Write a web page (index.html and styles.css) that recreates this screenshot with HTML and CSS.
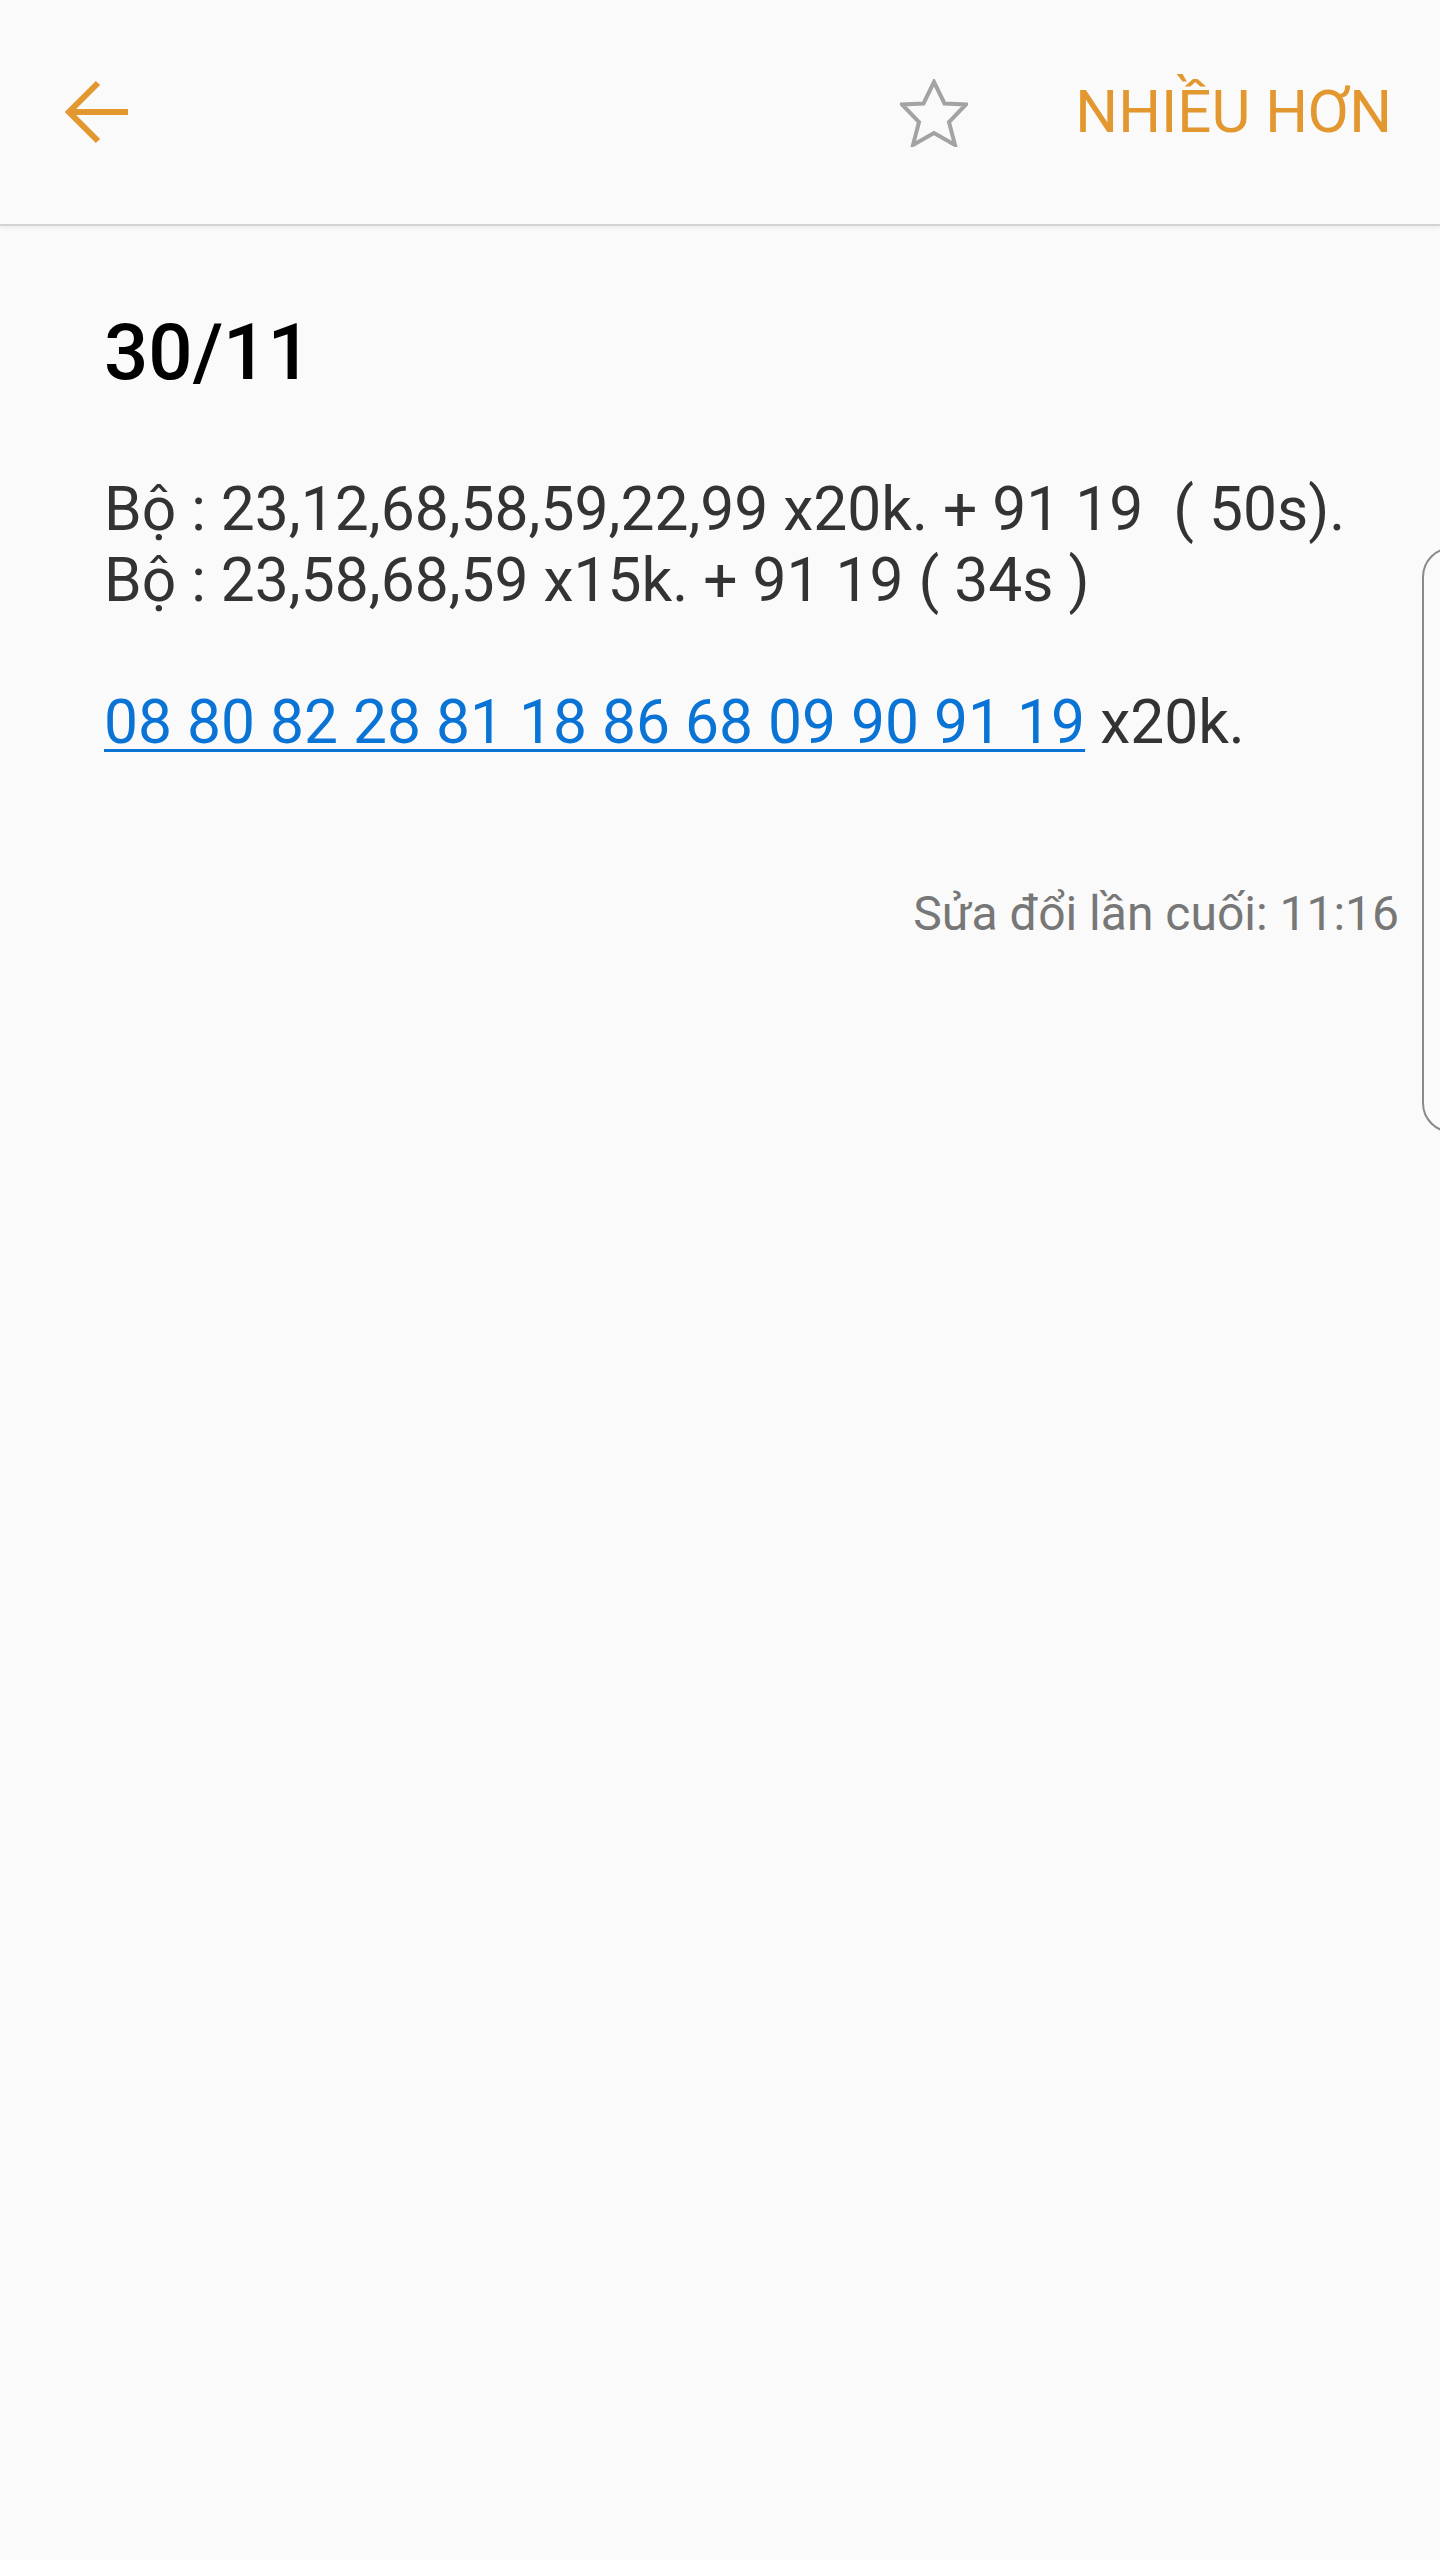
FILE: index.html
```html
<!DOCTYPE html>
<html lang="vi">
  <head>
    <meta name="viewport" content="width=device-width, initial-scale=1.0" />
    <title>30/11</title>
    <link rel="stylesheet" href="styles.css">
  </head>

  <body>
    <!-- Toolbar -->
    <header class="toolbar">
      <a class="back" href="#">
        <svg width="64" height="64" viewBox="0 0 64 64">
          <path d="M64 32 H5 M34 3 L5 32 L34 61" fill="none" stroke="#e2972f" stroke-width="6" />
        </svg>
      </a>
      <div class="actions">
        <svg class="star" width="68" height="68" viewBox="0 0 68 68">
          <polygon points="34,3 44.5,24.5 66,25.5 49,43 55,66 34,54 13,66 19,43 2,25.5 23.5,24.5" fill="none" stroke="#a3a3a3" stroke-width="4" stroke-linejoin="miter" />
        </svg>
        <span class="more">NHIỀU HƠN</span>
      </div>
    </header>

    <!-- Note -->
    <main class="note">
      <h1 class="title">30/11</h1>
      <div class="body">
        <p>Bộ : 23,12,68,58,59,22,99 x20k. + 91 19&nbsp; ( 50s).</p>
        <p>Bộ : 23,58,68,59 x15k. + 91 19 ( 34s )</p>
        <p>&nbsp;</p>
        <p><a href="#">08 80 82 28 81 18 86 68 09 90 91 19</a> x20k.</p>
      </div>
      <div class="edited">Sửa đổi lần cuối: 11:16</div>
    </main>

    <div class="edge-handle"></div>
  </body>
</html>
```

FILE: styles.css
```css
* {
  margin: 0;
  padding: 0;
  box-sizing: border-box;
}

body {
  background-color: #fafafa;
  font-family: Roboto, "Noto Sans", sans-serif;
  min-height: 2560px;
  overflow: hidden;
}

/* Toolbar */
.toolbar {
  height: 226px;
  display: flex;
  align-items: center;
  justify-content: space-between;
  padding: 0 48px 0 64px;
  border-bottom: 2px solid #d2d2d2;
  box-shadow: 0 2px 4px rgba(0, 0, 0, 0.06);
}

.back {
  display: flex;
}

.actions {
  display: flex;
  align-items: center;
}

.star {
  margin-right: 107px;
  margin-top: 2px;
}

.more {
  color: #e2972f;
  font-size: 60px;
  line-height: 70px;
}

/* Note content */
.note {
  padding: 81px 41px 0 104px;
}

.title {
  font-size: 78px;
  font-weight: 500;
  line-height: 92px;
  color: #000;
}

.body {
  margin-top: 75px;
  font-size: 60.5px;
  line-height: 71px;
  color: #333;
}

.body a {
  color: #0a74d6;
  text-decoration: underline;
  text-decoration-thickness: 3px;
  text-underline-offset: 6px;
}

.edited {
  margin-top: 128px;
  text-align: right;
  font-size: 48px;
  line-height: 56px;
  color: #777;
}

/* edge panel handle */
.edge-handle {
  position: absolute;
  left: 1422px;
  top: 547px;
  width: 60px;
  height: 586px;
  border: 2px solid #8a8a8a;
  border-radius: 34px;
}
```
